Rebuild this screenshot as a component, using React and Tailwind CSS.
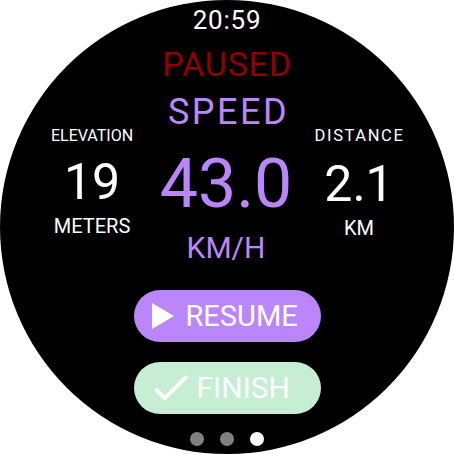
import React from "react";

function Stat({ label, value, unit, labelClass, valueGap, unitGap }) {
  return (
    <div className="flex flex-col items-center text-white">
      <div className={`leading-none ${labelClass}`}>{label}</div>
      <div className={`text-[50px] leading-none ${valueGap}`}>{value}</div>
      <div className={`text-[20px] leading-none ${unitGap}`}>{unit}</div>
    </div>
  );
}

export default function App() {
  return (
    <div className="w-[454px] h-[454px] bg-white" style={{ fontFamily: "Roboto, 'Liberation Sans', sans-serif" }}>
      <div className="w-[454px] h-[454px] rounded-full bg-black overflow-hidden flex flex-col items-center">
        <div className="pt-[7px] text-[26px] leading-none tracking-[0.8px] text-white">20:59</div>
        <div className="mt-[14px] text-[34px] leading-none tracking-[0.8px] text-[#900000]">PAUSED</div>
        <div className="mt-[13px] text-[36px] leading-none tracking-[2.5px] pl-[3px] text-[#bb86fc]">SPEED</div>

        <div className="mt-[-2px] w-full flex pl-[42px]">
          <div className="w-[100px] flex justify-center">
            <Stat label="ELEVATION" labelClass="text-[16px]" value="19" unit="METERS" valueGap="mt-[13px]" unitGap="mt-[9px]" />
          </div>
          <div className="w-[168px] flex flex-col items-center text-[#bb86fc]">
            <div className="mt-[22px] text-[68px] leading-none">43.0</div>
            <div className="mt-[15px] text-[30px] leading-none">KM/H</div>
          </div>
          <div className="w-[98px] flex justify-center">
            <Stat label="DISTANCE" labelClass="text-[16.5px] tracking-[1.6px] pl-[1px]" value="2.1" unit="KM" valueGap="mt-[14px]" unitGap="mt-[9px]" />
          </div>
        </div>

        <button className="mt-[27px] w-[187px] h-[52px] rounded-full bg-[#bb86fc] flex items-center pl-[18px] gap-[12px] text-white text-[29px] leading-none">
          <svg width="22" height="26" viewBox="0 0 22 26">
            <polygon points="0,0 22,13 0,26" fill="white" />
          </svg>
          <span>RESUME</span>
        </button>

        <button className="mt-[20px] w-[187px] h-[52px] rounded-full bg-[#c5eed4] flex items-center pl-[20px] gap-[9px] text-white text-[30px] leading-none">
          <svg width="34" height="26" viewBox="3.41 5.59 17.59 13.41">
            <path d="M9 16.17L4.83 12l-1.42 1.41L9 19 21 7l-1.41-1.41z" fill="white" />
          </svg>
          <span>FINISH</span>
        </button>

        <div className="mt-[18px] flex gap-[16px]">
          <div className="w-[14px] h-[14px] rounded-full bg-[#808080]" />
          <div className="w-[14px] h-[14px] rounded-full bg-[#808080]" />
          <div className="w-[14px] h-[14px] rounded-full bg-white" />
        </div>
      </div>
    </div>
  );
}
